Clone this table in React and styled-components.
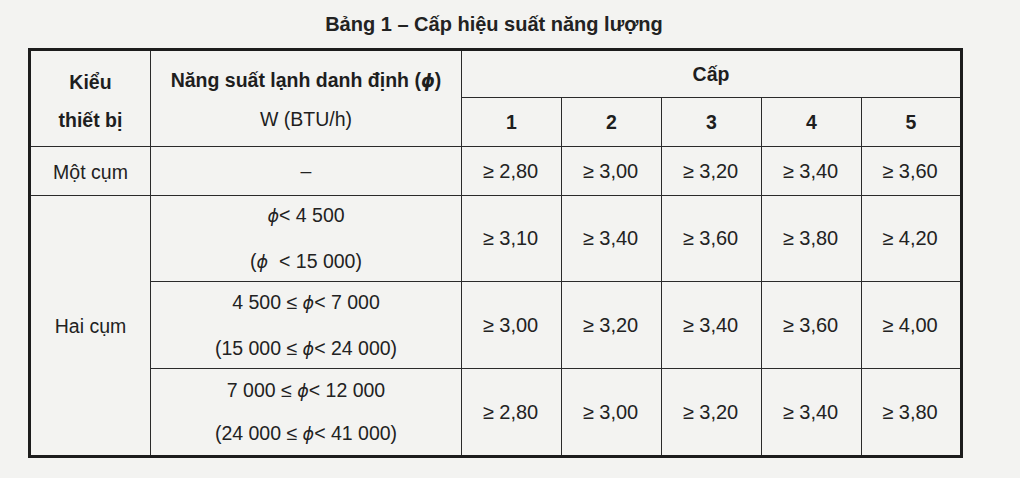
import React from "react";
import styled, { createGlobalStyle } from "styled-components";

const GlobalStyle = createGlobalStyle`
  html, body {
    margin: 0;
    padding: 0;
    background: #f3f3f1;
  }
  body {
    font-family: "Liberation Sans", Arial, sans-serif;
    color: #1f1f1f;
  }
`;

const levels = [1, 2, 3, 4, 5];

const rows = [
  { type: "Một cụm", capacity: ["–"], gap: 0, values: ["2,80", "3,00", "3,20", "3,40", "3,60"] },
  { type: "Hai cụm", span: 3, capacity: ["ϕ< 4 500", "(ϕ  < 15 000)"], gap: 45, values: ["3,10", "3,40", "3,60", "3,80", "4,20"] },
  { capacity: ["4 500 ≤ ϕ< 7 000", "(15 000 ≤ ϕ< 24 000)"], gap: 45, values: ["3,00", "3,20", "3,40", "3,60", "4,00"] },
  { capacity: ["7 000 ≤ ϕ< 12 000", "(24 000 ≤ ϕ< 41 000)"], gap: 42, values: ["2,80", "3,00", "3,20", "3,40", "3,80"] },
];

const rowHeights = [49, 86, 87, 88];

// phi is set in italic like the symbol font in the scan
const withPhi = (text) =>
  text.split("ϕ").map((part, i, arr) => (
    <React.Fragment key={i}>
      {part}
      {i < arr.length - 1 && <Phi>ϕ</Phi>}
    </React.Fragment>
  ));

const App = () => {
  return (
    <>
      <GlobalStyle />
      <Page>
        <Title>Bảng 1 – Cấp hiệu suất năng lượng</Title>
        <Table>
          <colgroup>
            <col style={{ width: 121 }} />
            <col style={{ width: 311 }} />
            {levels.map((l) => (
              <col key={l} style={{ width: 100 }} />
            ))}
          </colgroup>
          <thead>
            <tr style={{ height: 48 }}>
              <HeadCell rowSpan={2} $pad={4}>
                <Lines $gap={38}>
                  <span>Kiểu</span>
                  <span>thiết bị</span>
                </Lines>
              </HeadCell>
              <HeadCell rowSpan={2} $pad={2}>
                <Lines $gap={38}>
                  <span>Năng suất lạnh danh định ({withPhi("ϕ")})</span>
                  <Normal>W (BTU/h)</Normal>
                </Lines>
              </HeadCell>
              <HeadCell colSpan={5} $pad={0}>Cấp</HeadCell>
            </tr>
            <tr style={{ height: 49 }}>
              {levels.map((l) => (
                <HeadCell key={l} $pad={0}>{l}</HeadCell>
              ))}
            </tr>
          </thead>
          <tbody>
            {rows.map((row, i) => (
              <tr key={i} style={{ height: rowHeights[i] }}>
                {row.type && <TypeCell rowSpan={row.span || 1}>{row.type}</TypeCell>}
                <Cell>
                  <Lines $gap={row.gap}>
                    {row.capacity.map((c, j) => (
                      <span key={j}>{withPhi(c)}</span>
                    ))}
                  </Lines>
                </Cell>
                {row.values.map((v, j) => (
                  <ValueCell key={j}>≥ {v}</ValueCell>
                ))}
              </tr>
            ))}
          </tbody>
        </Table>
      </Page>
    </>
  );
};

export default App;

const Page = styled.div`
  width: 1020px;
  height: 478px;
  padding: 12px 0 0 28px;
  box-sizing: border-box;
  overflow: hidden;
`;

const Title = styled.h1`
  margin: 0 0 11px 0;
  width: 932px;
  text-align: center;
  font-size: 20px;
  line-height: 25px;
  font-weight: bold;
  color: #222;
`;

const Table = styled.table`
  width: 932px;
  table-layout: fixed;
  border-collapse: collapse;
  border: 3px solid #1c1c1c;
  font-size: 19.5px;
`;

const HeadCell = styled.th`
  border: 1.5px solid #2a2a2a;
  text-align: center;
  vertical-align: middle;
  font-weight: bold;
  padding: ${(p) => p.$pad}px 0 0 0;
  color: #1e1e1e;
`;

const Cell = styled.td`
  border: 1.5px solid #2a2a2a;
  text-align: center;
  vertical-align: middle;
  padding: 0;
  color: #222;
`;

const TypeCell = styled(Cell)`
  padding-top: 2px;
`;

const ValueCell = styled(Cell)`
  font-size: 20px;
  padding-right: 2px;
`;

const Lines = styled.div`
  display: flex;
  flex-direction: column;
  align-items: center;
  line-height: 22px;
  row-gap: ${(p) => Math.max(p.$gap - 22, 0)}px;
  white-space: pre;
`;

const Normal = styled.span`
  font-weight: normal;
`;

const Phi = styled.i`
  font-family: "DejaVu Sans", sans-serif;
  font-size: 0.9em;
  font-style: italic;
`;
